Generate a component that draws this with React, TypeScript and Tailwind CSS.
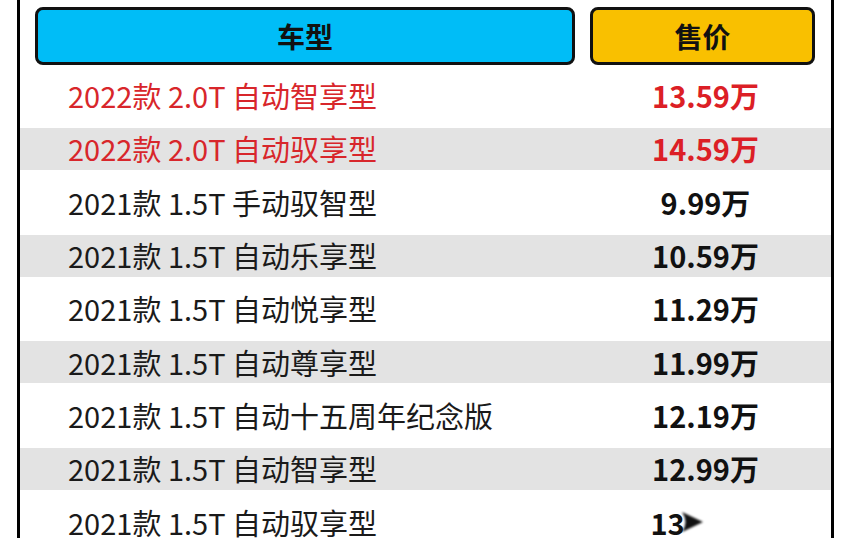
const rows = [
  { name: '2022款 2.0T 自动智享型', price: '13.59万', red: true },
  { name: '2022款 2.0T 自动驭享型', price: '14.59万', red: true },
  { name: '2021款 1.5T 手动驭智型', price: '9.99万' },
  { name: '2021款 1.5T 自动乐享型', price: '10.59万' },
  { name: '2021款 1.5T 自动悦享型', price: '11.29万' },
  { name: '2021款 1.5T 自动尊享型', price: '11.99万' },
  { name: '2021款 1.5T 自动十五周年纪念版', price: '12.19万' },
  { name: '2021款 1.5T 自动智享型', price: '12.99万' },
  { name: '2021款 1.5T 自动驭享型', price: '13', cut: true },
]

export default function App() {
  return (
    <div
      className="w-[852px] h-[538px] overflow-hidden bg-white"
      style={{ fontFamily: '"Noto Sans CJK SC", "Noto Sans", sans-serif' }}
    >
      <div className="ml-[17px] w-[817px] h-full border-x-[3px] border-black">
        {/* header */}
        <div className="flex gap-[15px] pl-[15px] pt-[7px]">
          <div className="w-[540px] h-[58px] rounded-[8px] border-[3px] border-[#111] bg-[#00bdf7] flex items-center justify-center text-[28px] font-bold text-[#111]">
            车型
          </div>
          <div className="w-[225px] h-[58px] rounded-[8px] border-[3px] border-[#111] bg-[#f9c000] flex items-center justify-center text-[28px] font-bold text-[#111]">
            售价
          </div>
        </div>

        {/* rows */}
        <div className="mt-[4px]">
          {rows.map((r, i) => (
            <div key={i} className="h-[53.33px] flex items-center">
              <div
                className={`w-full h-[42px] flex items-center pl-[15px] gap-[15px] ${
                  i % 2 === 1 ? 'bg-[#e3e3e3]' : 'bg-white'
                }`}
              >
                <div
                  className={`w-[540px] pl-[33px] text-[29px] leading-none whitespace-nowrap ${
                    r.red ? 'text-[#d8262b]' : 'text-[#1a1a1a]'
                  }`}
                >
                  {r.name}
                </div>
                <div
                  className={`w-[225px] pl-[6px] text-center text-[29px] font-bold leading-none ${
                    r.red ? 'text-[#dc1f26]' : 'text-[#111]'
                  }`}
                >
                  {r.cut ? (
                    <span className="inline-flex items-center pr-[56px]">
                      13
                      <svg width="26" height="26" viewBox="0 0 26 26" className="-ml-[6px] blur-[1px]">
                        <path d="M3 3 L24 13 L3 23 Q10 13 3 3 Z" fill="#111" />
                      </svg>
                    </span>
                  ) : (
                    r.price
                  )}
                </div>
              </div>
            </div>
          ))}
        </div>
      </div>
    </div>
  )
}
